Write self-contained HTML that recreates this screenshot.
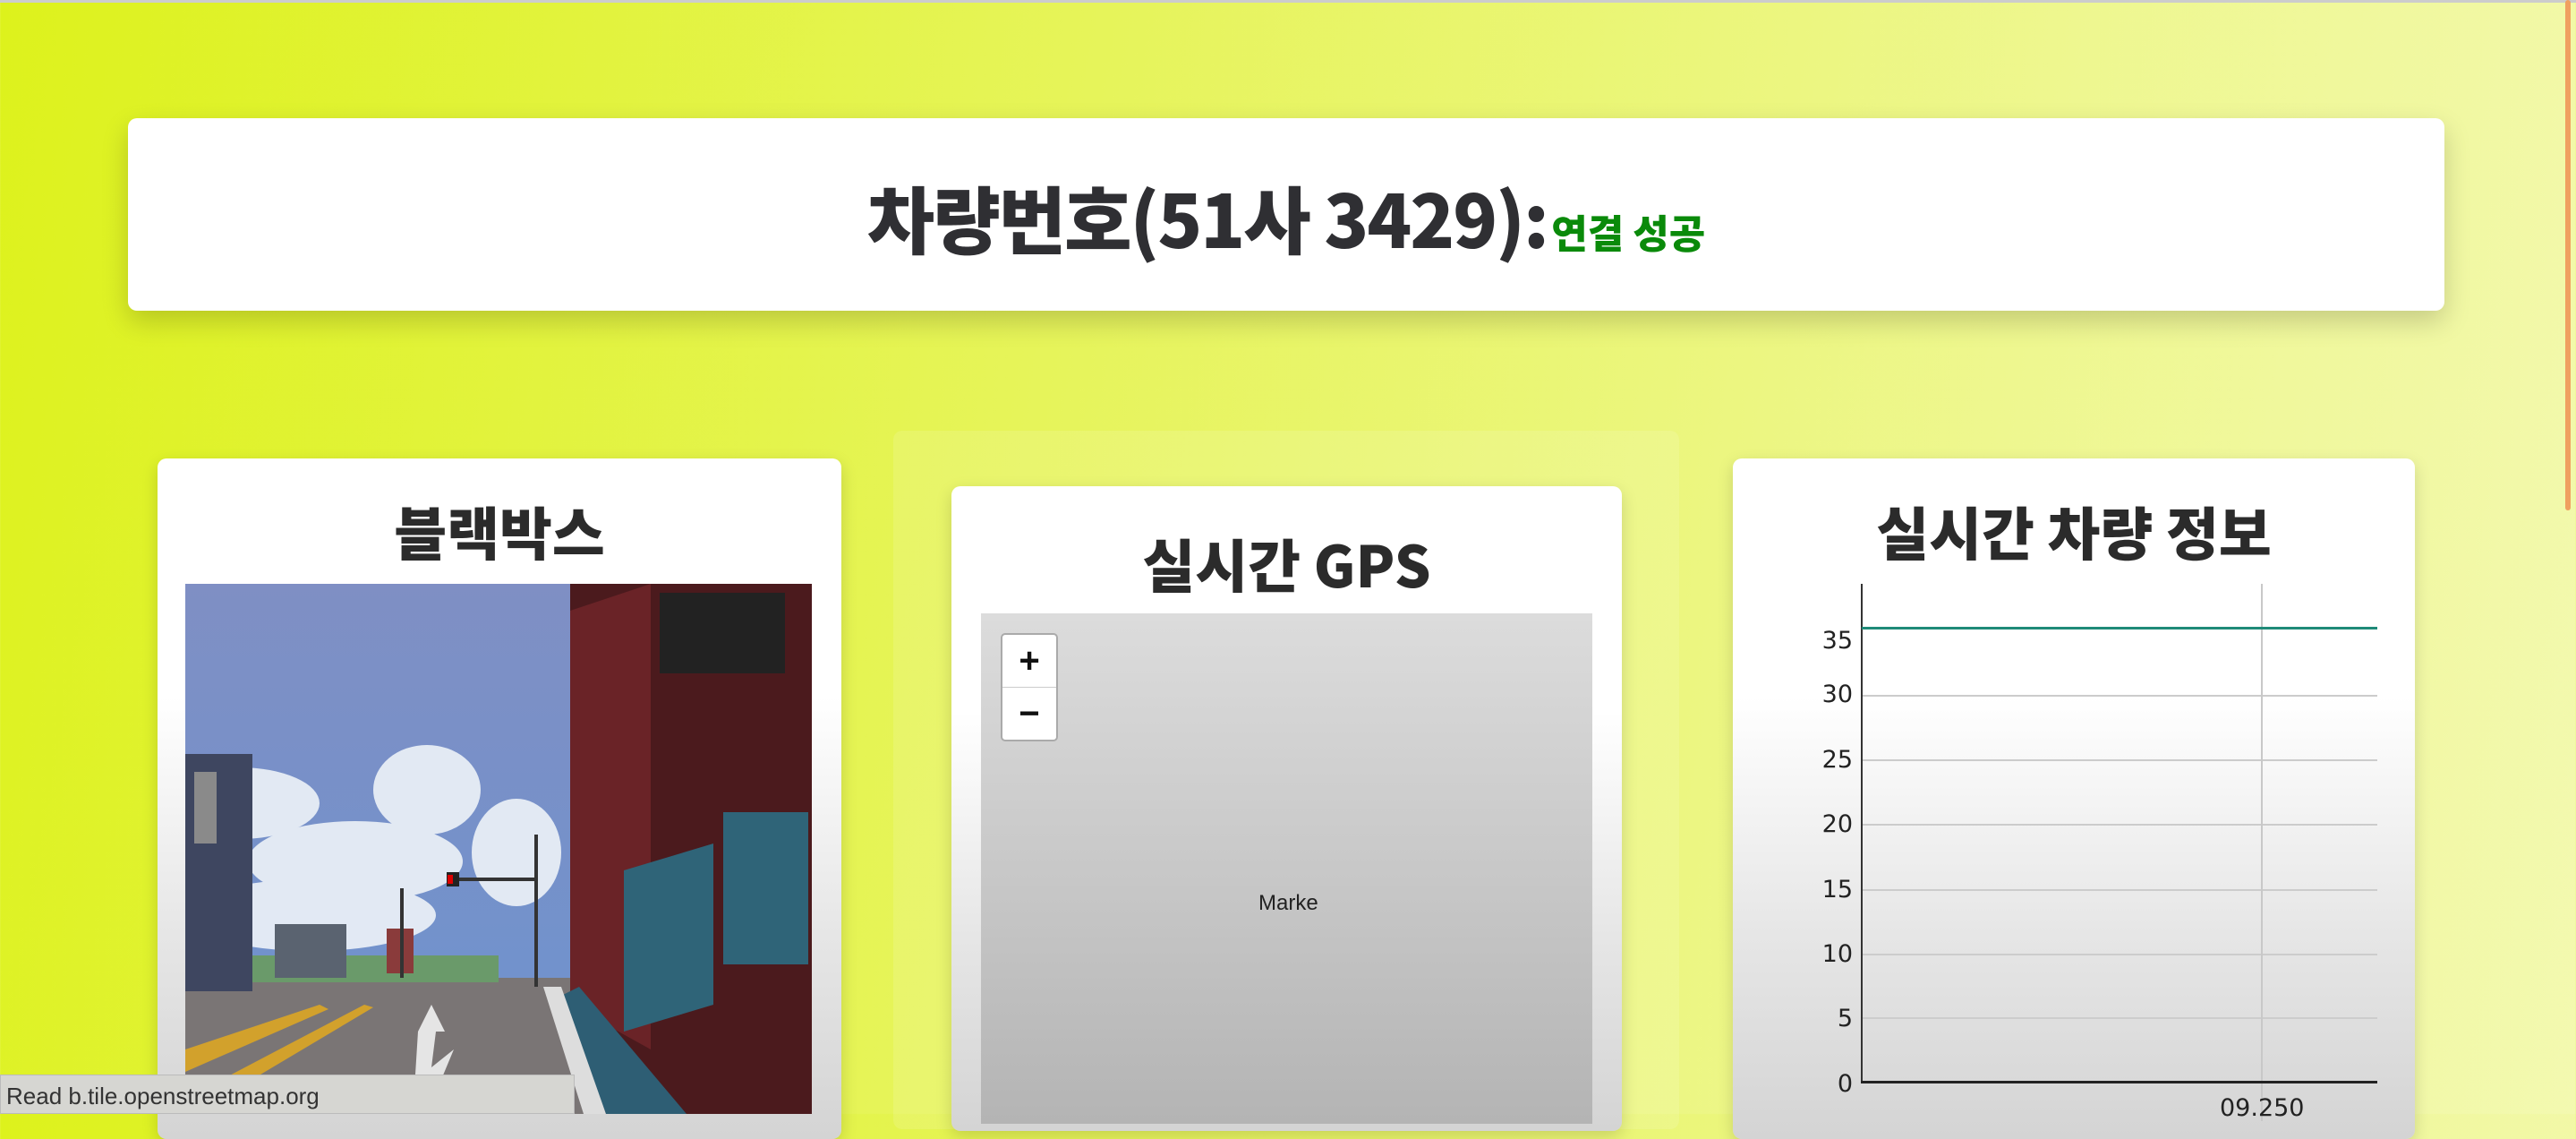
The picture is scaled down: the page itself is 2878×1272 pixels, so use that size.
<!DOCTYPE html>
<html><head><meta charset="utf-8"><style>
*{margin:0;padding:0;box-sizing:border-box}
body{width:2878px;height:1244px;overflow:hidden;position:relative;background:linear-gradient(100deg,#ddf21c 0%,#e6f45a 40%,#eef78f 75%,#f3f9b0 100%);font-family:"Liberation Sans","Noto Sans CJK KR",sans-serif}
.abs{position:absolute}
.card{position:absolute;background:linear-gradient(180deg,#fff 0%,#fff 35%,#e6e6e6 70%,#d4d4d4 100%);border-radius:10px;box-shadow:0 6px 18px rgba(0,0,0,.15)}
h2{position:absolute;left:0;right:0;text-align:center;font-family:"Noto Sans CJK KR",sans-serif;font-weight:900;color:#2b2b2b}
.yl{position:absolute;width:60px;text-align:right;font-size:27px;color:#222;font-family:"DejaVu Sans",sans-serif}
.gl{position:absolute;left:2080px;width:576px;height:2px;background:#ccc}
</style></head><body>
<div class="abs" style="left:0;top:0;width:2878px;height:3px;background:#ccc"></div>
<div class="abs" style="left:2866px;top:0;width:6px;height:570px;background:#f0a060;border-radius:3px"></div>

<div class="card" style="left:143px;top:132px;width:2588px;height:215px;background:#fff;box-shadow:0 12px 30px rgba(0,0,0,.18)">
<div style="position:absolute;left:0;right:0;top:50px;text-align:center;white-space:nowrap"><span style="font-family:'Noto Sans CJK KR',sans-serif;font-weight:900;font-size:82px;color:#2f2f33;letter-spacing:-2px">차량번호(51사 3429):</span> <span style="font-family:'Noto Sans CJK KR',sans-serif;font-weight:900;font-size:44px;color:#0a8a0a">연결 성공</span></div>
</div>

<!-- blackbox -->
<div class="card" style="left:176px;top:512px;width:764px;height:760px">
<h2 style="top:35px;font-size:64px">블랙박스</h2>
</div>
<svg class="abs" style="left:207px;top:652px" width="700" height="592" viewBox="0 0 700 592">
<defs><linearGradient id="sky" x1="0" y1="0" x2="0" y2="1"><stop offset="0" stop-color="#7f8fc4"/><stop offset="1" stop-color="#6d93cf"/></linearGradient></defs>
<rect width="700" height="592" fill="url(#sky)"/>
<g fill="#e8eef6" opacity=".95"><ellipse cx="60" cy="245" rx="90" ry="40"/><ellipse cx="190" cy="310" rx="120" ry="45"/><ellipse cx="270" cy="230" rx="60" ry="50"/><ellipse cx="140" cy="370" rx="140" ry="40"/><ellipse cx="370" cy="300" rx="50" ry="60"/></g>
<rect x="0" y="440" width="700" height="152" fill="#7a7575"/>
<rect x="0" y="415" width="350" height="30" fill="#6a9a6a"/>
<rect x="100" y="380" width="80" height="60" fill="#5a6370"/><rect x="225" y="385" width="30" height="50" fill="#8a3b3b"/>
<rect x="0" y="190" width="75" height="265" fill="#3e4660"/><rect x="10" y="210" width="25" height="80" fill="#8a8a8a"/>
<polygon points="430,0 700,0 700,592 460,592 430,470" fill="#4b1a1d"/>
<polygon points="430,30 520,0 520,520 430,470" fill="#6a2327"/>
<rect x="530" y="10" width="140" height="90" fill="#222"/>
<polygon points="490,320 590,290 590,470 490,500" fill="#2f6478"/>
<rect x="601" y="255" width="95" height="170" fill="#2f6478"/>
<polygon points="420,460 470,592 560,592 440,450" fill="#2e5e74"/>
<polygon points="400,450 420,450 470,592 445,592" fill="#ddd"/>
<polygon points="0,520 150,470 160,475 0,545" fill="#d2a12c"/>
<polygon points="0,575 200,470 210,473 10,592" fill="#d2a12c"/>
<polygon points="260,500 275,470 290,500 280,500 275,540 300,520 275,580 255,580" fill="#e5e5e5"/>
<rect x="240" y="340" width="4" height="100" fill="#333"/><rect x="390" y="280" width="4" height="170" fill="#333"/><rect x="300" y="328" width="90" height="4" fill="#333"/><rect x="292" y="322" width="14" height="16" fill="#222"/><rect x="293" y="325" width="6" height="10" fill="#d00"/>
</svg>

<!-- GPS -->
<div class="abs" style="left:998px;top:481px;width:878px;height:780px;background:rgba(255,255,255,.12);border-radius:10px"></div>
<div class="card" style="left:1063px;top:543px;width:749px;height:720px">
<h2 style="top:40px;font-size:64px">실시간 GPS</h2>
</div>
<div class="abs" style="left:1096px;top:685px;width:683px;height:570px;background:linear-gradient(180deg,#dcdcdc,#c4c4c4 60%,#b4b4b4)"></div>
<div class="abs" style="left:1118px;top:707px;width:64px;height:121px;background:#fff;border:2px solid #aaa;border-radius:5px;text-align:center;font-size:40px;font-weight:bold;color:#111;line-height:58px">+<div style="border-top:1px solid #ccc">−</div></div>
<div class="abs" style="left:1406px;top:995px;font-size:24px;color:#222;width:66px;overflow:hidden;white-space:nowrap">Marker</div>

<!-- chart -->
<div class="card" style="left:1936px;top:512px;width:762px;height:760px">
<h2 style="top:35px;font-size:64px">실시간 차량 정보</h2>
</div>
<div class="gl" style="top:776px"></div><div class="gl" style="top:848px"></div><div class="gl" style="top:920px"></div><div class="gl" style="top:993px"></div><div class="gl" style="top:1065px"></div><div class="gl" style="top:1136px"></div>
<div class="abs" style="left:2526px;top:652px;width:2px;height:600px;background:#c8c8c8"></div>
<div class="abs" style="left:2079px;top:652px;width:2px;height:558px;background:#333"></div>
<div class="abs" style="left:2079px;top:1207px;width:577px;height:3px;background:#222"></div>
<div class="abs" style="left:2080px;top:700px;width:576px;height:3px;background:#1f8a78"></div>
<div class="yl" style="left:2010px;top:700px">35</div><div class="yl" style="left:2010px;top:760px">30</div><div class="yl" style="left:2010px;top:833px">25</div><div class="yl" style="left:2010px;top:905px">20</div><div class="yl" style="left:2010px;top:978px">15</div><div class="yl" style="left:2010px;top:1050px">10</div><div class="yl" style="left:2010px;top:1122px">5</div><div class="yl" style="left:2010px;top:1195px">0</div>
<div class="abs" style="left:2480px;top:1222px;font-size:27px;color:#222;font-family:'DejaVu Sans',sans-serif">09.250</div>

<div class="abs" style="left:0;top:1200px;width:642px;height:44px;background:#d6d6d2;border:1px solid #bbb;font-size:26px;color:#333;padding:8px 6px;white-space:nowrap">Read b.tile.openstreetmap.org</div>
</body></html>
